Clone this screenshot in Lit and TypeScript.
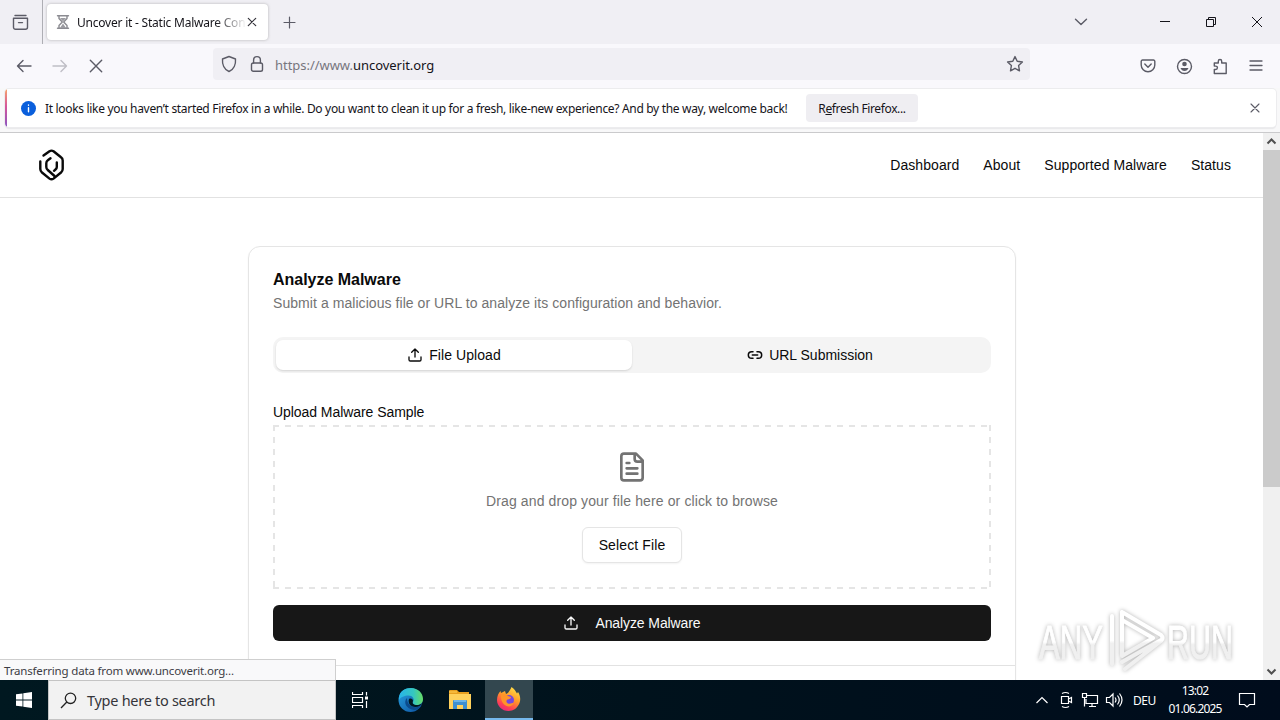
import { LitElement, html, css, svg } from "lit";
import { customElement } from "lit/decorators.js";

const upload = svg`<path d="M12 3v12M17 8l-5-5-5 5M21 15v4a2 2 0 0 1-2 2H5a2 2 0 0 1-2-2v-4"/>`;

@customElement("browser-chrome")
class BrowserChrome extends LitElement {
  static styles = css`
    :host { display: block; font-family: "Noto Sans", "Open Sans", sans-serif; color: #15141a; height: 133px; }
    svg { display: block; fill: none; stroke: #5b5b66; stroke-width: 1.4; stroke-linecap: round; stroke-linejoin: round; flex: none; }
    .tabs { height: 44px; background: #f0eff4; display: flex; align-items: center; box-sizing: border-box; }
    .view { width: 43px; height: 44px; border-right: 1px solid #aeaeb4; display: flex; align-items: center; padding-left: 12px; box-sizing: border-box; }
    .tab { margin-left: 4px; width: 221px; height: 36px; border-radius: 4px; background: #fff; box-shadow: 0 0 3px #8889; display: flex; align-items: center; box-sizing: border-box; padding: 0 9px 0 8px; }
    .title { margin-left: 6px; width: 168px; white-space: nowrap; font-size: 12px; letter-spacing: -0.22px; -webkit-mask-image: linear-gradient(90deg, #000 138px, transparent 170px); }
    .x { margin-left: 2px; }
    .plus { margin-left: 14px; }
    .gap { flex: 1; }
    .win { display: flex; align-items: center; gap: 34px; padding-right: 17px; }
    .win svg { stroke: #15141a; stroke-width: 1; stroke-linecap: butt; stroke-linejoin: miter; }
    .chev { margin-right: 71px; }
    .bar { height: 44px; background: #f9f8fc; display: flex; align-items: center; padding: 0 16px; box-sizing: border-box; }
    .nav { display: flex; gap: 20px; width: 197px; }
    .url { width: 817px; height: 32px; background: #f0eff4; border-radius: 4px; display: flex; align-items: center; padding: 0 6px 0 7px; box-sizing: border-box; margin-top: -4px; }
    .lock { margin: 0 11px 0 12px; }
    .addr { flex: 1; font-size: 13px; color: #77767e; margin-top: 2px; letter-spacing: -0.04px; }
    .addr b { font-weight: 400; color: #15141a; }
    .tools { margin-left: auto; display: flex; gap: 20px; }
    .puzzle { margin-left: -1px; }
    .notice { height: 45px; background: #f8f8f9; border-bottom: 1px solid #cacacc; box-sizing: border-box; padding: 1px 4px 0 5px; }
    .box { height: 38px; background: #fff; border-radius: 4px; box-shadow: 0 0 0 1px #ececee, 0 2px 1px #e8e8ea; display: flex; align-items: center; overflow: hidden; }
    .stripe { width: 2px; height: 38px; background: linear-gradient(#f6a36b, #d6569a 45%, #8a55c0); }
    .info { margin: 0 9px 0 14px; }
    .msg { font-size: 12px; width: 761px; white-space: nowrap; letter-spacing: -0.318px; }
    .btn { width: 112px; height: 28px; border-radius: 4px; background: #efeef2; display: grid; place-items: center; font-size: 12px; letter-spacing: -0.38px; }
    .close { margin-left: auto; margin-right: 16px; }
  `;
  render() {
    return html`
      <div class="tabs">
        <div class="view"><svg width="17" height="17" viewBox="0 0 17 17"><path d="M3 1.5h11M1.5 4.3h14v9a2 2 0 0 1-2 2h-10a2 2 0 0 1-2-2zM6.5 8.6h4"/></svg></div>
        <div class="tab">
          <svg width="16" height="16" viewBox="0 0 16 16"><path stroke="#8b8b91" d="M2.5 1.7h11M2.5 14.3h11M4 2v2.5L7.3 8 4 11.5V14M12 2v2.5L8.7 8l3.3 3.5V14"/><path stroke="none" fill="#9b9ba1" d="M5 4h6L8 7.5zM5 14l3-4.5 3 4.5z"/></svg>
          <span class="title">Uncover it - Static Malware Con</span>
          <svg class="x" width="10" height="10" viewBox="0 0 10 10"><path stroke="#33323a" stroke-width="1.2" d="M1.3 1.3l7.4 7.4M8.7 1.3L1.3 8.7"/></svg>
        </div>
        <svg class="plus" width="15" height="15" viewBox="0 0 15 15"><path stroke-width="1.2" d="M7.5 2v11M2 7.5h11"/></svg>
        <span class="gap"></span>
        <svg class="chev" width="14" height="8" viewBox="0 0 14 8"><path d="M1.5 1.2L7 6.5l5.500-5.300"/></svg>
        <div class="win">
          <svg width="12" height="12" viewBox="0 0 12 12"><path d="M1 5.500h10"/></svg>
          <svg class="r" width="12" height="12" viewBox="0 0 12 12"><path d="M1.500 3.500h7v7h-7zM3.500 3v-1.500h7v7H9"/></svg>
          <svg width="12" height="12" viewBox="0 0 12 12"><path d="M1 1l10 10M11 1L1 11"/></svg>
        </div>
      </div>
      <div class="bar">
        <div class="nav">
          <svg width="16" height="16" viewBox="0 0 16 16"><path d="M15 8H1.500M7 2.500L1.500 8 7 13.500"/></svg>
          <svg width="16" height="16" viewBox="0 0 16 16"><path stroke="#bfbec5" d="M1 8h13.500M9 2.500L14.500 8 9 13.500"/></svg>
          <svg width="16" height="16" viewBox="0 0 16 16"><path d="M2.300 2.300l11.400 11.400M13.700 2.300L2.300 13.700"/></svg>
        </div>
        <div class="url">
          <svg width="18" height="18" viewBox="0 0 18 18"><path d="M9 1.500l6.500 2.500c.4 5-1.500 10.500-6.500 12.500C4 14.500 2.100 9 2.500 4z"/></svg>
          <svg class="lock" width="14" height="18" viewBox="0 0 14 18"><rect x="1.500" y="8" width="11" height="8.300" rx="1.800"/><path d="M3.600 8V5a3.400 3.400 0 0 1 6.800 0v3"/></svg>
          <span class="addr">https://www.<b>uncoverit.org</b></span>
          <svg width="18" height="18" viewBox="0 0 18 18"><path d="M9 1.600l2.200 4.700 5.200.7-3.800 3.600.9 5.200L9 13.300l-4.500 2.500.9-5.200L1.600 7l5.200-.7z"/></svg>
        </div>
        <div class="tools">
          <svg width="16" height="16" viewBox="0 0 16 16"><path d="M2.500 2h11A1.300 1.300 0 0 1 14.800 3.300V7a6.800 6.800 0 0 1-13.600 0V3.300A1.300 1.300 0 0 1 2.500 2zM4.800 6L8 9.200 11.200 6"/></svg>
          <svg width="17" height="17" viewBox="0 0 17 17"><circle cx="8.500" cy="8.500" r="7"/><circle cx="8.500" cy="6" r="2.300" fill="#5b5b66" stroke="none"/><path d="M4.500 10h8c-.7 2-2.200 3-4 3s-3.300-1-4-3z" fill="#5b5b66" stroke="none"/></svg>
          <svg class="puzzle" width="16" height="17" viewBox="0 0 16 17"><path d="M2.300 15.500v-4h1.400a1.700 1.700 0 0 0 0-3.400H2.300V5h4V3.200a1.700 1.700 0 0 1 3.400 0V5h4.500v10.500z"/></svg>
          <svg width="16" height="16" viewBox="0 0 16 16"><path stroke-width="1.300" d="M2 3h12M2 7.500h12M2 12h12"/></svg>
        </div>
      </div>
      <div class="notice"><div class="box">
        <span class="stripe"></span>
        <svg class="info" width="15" height="15" viewBox="0 0 15 15"><circle cx="7.500" cy="7.500" r="7.500" fill="#0a5fdc" stroke="none"/><path stroke="#fff" d="M7.500 6.800v4M7.500 4v.2"/></svg>
        <span class="msg">It looks like you haven’t started Firefox in a while. Do you want to clean it up for a fresh, like-new experience? And by the way, welcome back!</span>
        <span class="btn"><span>R<u>e</u>fresh Firefox...</span></span>
        <svg class="close" width="10" height="10" viewBox="0 0 10 10"><path stroke-width="1.100" d="M1 1l8 8M9 1L1 9"/></svg>
      </div></div>`;
  }
}

@customElement("malware-page")
class MalwarePage extends LitElement {
  static styles = css`
    :host { display: flex; height: 547px; overflow: hidden; font-family: "Liberation Sans", Arial, sans-serif; font-size: 14px; line-height: 20px; color: #0a0a0a; background: #fff; position: relative; }
    svg { fill: none; stroke: currentColor; stroke-width: 2; stroke-linecap: round; stroke-linejoin: round; display: block; flex: none; }
    .page { width: 1263px; flex: none; }
    header { height: 65px; box-sizing: border-box; border-bottom: 1px solid #e2e2e2; display: flex; justify-content: space-between; align-items: center; padding: 0 32px 0 36px; }
    nav { display: flex; gap: 24px; letter-spacing: 0.07px; }
    .card { width: 768px; box-sizing: border-box; height: 560px; margin: 48px auto 0 248px; border: 1px solid #e5e5e5; border-radius: 12px; padding: 25px 24px 24px; box-shadow: 0 1px 2px #0000000d; }
    h1 { margin: 0; font-size: 16px; line-height: 16px; letter-spacing: -0.02px; }
    .sub { margin: 5px 0 24px; color: #737373; letter-spacing: 0.06px; }
    .switch { height: 36px; box-sizing: border-box; background: #f4f4f4; border-radius: 10px; padding: 3px; display: grid; grid-template-columns: 1fr 1fr; letter-spacing: 0; }
    .opt { display: flex; align-items: center; justify-content: center; gap: 6px; border-radius: 7px; }
    .on { background: #fff; box-shadow: 0 1px 2px #0002; letter-spacing: 0.08px; }
    .label { margin-top: 29px; line-height: 20px; letter-spacing: -0.06px; }
    .drop { margin-top: 3px; height: 164px; box-sizing: border-box; color: #737373; display: flex; flex-direction: column; align-items: center; padding-top: 26px; letter-spacing: 0.12px; background:
      repeating-linear-gradient(90deg, #e5e5e5 0 6px, transparent 6px 12px) 0 0 / 100% 2px no-repeat,
      repeating-linear-gradient(90deg, #e5e5e5 0 6px, transparent 6px 12px) 0 100% / 100% 2px no-repeat,
      repeating-linear-gradient(#e5e5e5 0 6px, transparent 6px 12px) 0 0 / 2px 100% no-repeat,
      repeating-linear-gradient(#e5e5e5 0 6px, transparent 6px 12px) 100% 0 / 2px 100% no-repeat; }
    .hint { margin-top: 8px; }
    .select { margin-top: 16px; width: 100px; height: 36px; box-sizing: border-box; border: 1px solid #e5e5e5; border-radius: 6px; color: #0a0a0a; display: grid; place-items: center; box-shadow: 0 1px 2px #0000000d; background: #fff; }
    .go { margin-top: 16px; height: 36px; background: #171717; color: #fafafa; border-radius: 6px; display: flex; align-items: center; justify-content: center; gap: 16px; letter-spacing: -0.1px; }
    .rule { margin: 24px -24px 0; border-top: 1px solid #e2e2e2; }
    .scroll { width: 17px; background: #f0f0f0; display: flex; flex-direction: column; justify-content: space-between; }
    .scroll svg { stroke: #505050; stroke-linecap: butt; stroke-linejoin: miter; }
    .thumb { height: 337px; background: #cbcbcb; margin-bottom: auto; }
    .mark { position: absolute; left: 1030px; top: 467px; stroke: none; filter: drop-shadow(0 0 2px #0000004d); }
    .mark text { font: 400 49px/1 "Liberation Sans", Arial, sans-serif; }
    .status { position: absolute; left: 0; bottom: 0; width: 336px; height: 21px; box-sizing: border-box; border: solid #cfcfcf; border-width: 1px 1px 0 0; background: #f9f9fa; color: #3c3c44; font: 11.500px/22px "Noto Sans", "Open Sans", sans-serif; padding-left: 4px; letter-spacing: -0.17px; white-space: nowrap; }
  `;
  render() {
    return html`
      <div class="page">
        <header>
          <svg width="32" height="34" viewBox="0 0 32 34"><g stroke="#0a0a0a" stroke-width="2.400"><path d="M7.500 7.500L13.500 3.200q2-1.200 4 0L25 9.300q1.700 1.300 1.700 3.200V21q0 2-1.700 3.500L17.500 30.600q-2 1.500-4 0L6 24.500Q4.300 23 4.300 21V13.500"/><path d="M14.500 10.300L11.800 12.300q-1.500 1-1.500 3V19q0 1.800 1.500 3L18.500 28M20.800 14.500V19q0 1.500-1.300 2.500L18 22.800"/></g></svg>
          <nav><span>Dashboard</span><span>About</span><span>Supported Malware</span><span>Status</span></nav>
        </header>
        <main class="card">
          <h1>Analyze Malware</h1>
          <div class="sub">Submit a malicious file or URL to analyze its configuration and behavior.</div>
          <div class="switch">
            <div class="opt on"><svg width="16" height="16" viewBox="0 0 24 24">${upload}</svg>File Upload</div>
            <div class="opt"><svg width="16" height="16" viewBox="0 0 24 24"><path stroke-width="2.300" d="M9 17H7A5 5 0 0 1 7 7h2M15 7h2a5 5 0 1 1 0 10h-2M8 12h8"/></svg>URL Submission</div>
          </div>
          <div class="label">Upload Malware Sample</div>
          <div class="drop">
            <svg width="32" height="32" viewBox="0 0 24 24"><path d="M15 2H6a2 2 0 0 0-2 2v16a2 2 0 0 0 2 2h12a2 2 0 0 0 2-2V7zM14 2v4a2 2 0 0 0 2 2h4M10 9H8M16 13H8M16 17H8"/></svg>
            <div class="hint">Drag and drop your file here or click to browse</div>
            <div class="select">Select File</div>
          </div>
          <div class="go"><svg width="16" height="16" viewBox="0 0 24 24">${upload}</svg>Analyze Malware</div>
          <div class="rule"></div>
        </main>
      </div>
      <div class="scroll">
        <svg width="17" height="17" viewBox="0 0 17 17"><path d="M4.500 10.500l4-4 4 4"/></svg>
        <div class="thumb"></div>
        <svg width="17" height="17" viewBox="0 0 17 17"><path d="M4.500 6.500l4 4 4-4"/></svg>
      </div>
      <svg class="mark" width="214" height="80" viewBox="0 0 214 80">
        <defs><linearGradient id="fade" x2="0" y2="1"><stop offset=".5" stop-color="#fff"/><stop offset=".55" stop-color="#f0f0f0"/></linearGradient></defs>
        <g fill="url(#fade)" stroke="url(#fade)" stroke-width="1"><text x="9" y="59" textLength="64" lengthAdjust="spacingAndGlyphs">ANY</text><text x="137" y="59" textLength="66" lengthAdjust="spacingAndGlyphs">RUN</text></g>
        <g stroke="url(#fade)" stroke-width="4"><path d="M82 16v48M92 12l39 23q3 3 0 6L95 69M92 12v44l31-18-31-18M92 62l39-22"/></g>
      </svg>
      <div class="status">Transferring data from www.uncoverit.org...</div>`;
  }
}

@customElement("task-bar")
class TaskBar extends LitElement {
  static styles = css`
    :host { display: flex; height: 40px; background: linear-gradient(90deg, #001820, #00121c 50%, #000c1c); color: #fff; font-family: "Noto Sans", "Open Sans", sans-serif; align-items: center; }
    svg { display: block; fill: none; stroke: #fff; stroke-width: 1.200; flex: none; }
    .start { width: 48px; display: grid; place-items: center; }
    .search { width: 288px; height: 40px; box-sizing: border-box; background: #f2f2f2; border: 1px solid #c4c4c4; color: #35353a; display: flex; align-items: center; padding-left: 11px; gap: 10px; font-size: 14.500px; letter-spacing: -0.28px; }
    .app { width: 48px; height: 40px; display: grid; place-items: center; }
    .app svg { stroke: none; }
    .app .tv { stroke: #fff; }
    .edge { width: 54px; }
    .files { width: 44px; }
    .active { width: 48px; margin-left: 3px; background: #33474f; border-bottom: 2px solid #76b9ed; box-sizing: border-box; }
    .tray { margin-left: auto; display: flex; align-items: center; height: 40px; }
    .lang { font-size: 12px; width: 31px; letter-spacing: -0.5px; margin-left: 10px; }
    .clock { font-size: 12px; line-height: 18px; width: 62px; text-align: center; letter-spacing: -0.820px; }
    .note { margin: 0 24px 0 12px; }
    .a { margin-right: 9px; } .b { margin-right: 7px; } .c { margin-right: 6px; }
  `;
  render() {
    return html`
      <div class="start"><svg width="16" height="16" viewBox="0 0 16 16"><path stroke="none" fill="#fff" d="M0 2.300l6.500-.9v6.200H0zM7.300 1.300L16 0v7.600H7.300zM0 8.400h6.500v6.200L0 13.700zM7.300 8.400H16V16l-8.700-1.300z"/></svg></div>
      <div class="search"><svg width="17" height="17" viewBox="0 0 17 17"><g stroke="#222" stroke-width="1.300"><circle cx="10.500" cy="6.300" r="5.200"/><path d="M6.800 10L1 16"/></g></svg>Type here to search</div>
      <div class="app"><svg class="tv" width="16" height="16" viewBox="0 0 16 16"><path d="M.5 0v2.500h10V0M.5 16v-2.500h10V16M.5 5.500h10v5H.5zM14.500 0v3.500M14.500 9v7"/><path fill="#fff" stroke="none" d="M13 4.500h3v3h-3z"/></svg></div>
      <div class="app edge"><svg width="26" height="26" viewBox="0 0 26 26"><defs><linearGradient id="e1"><stop stop-color="#28b4ea"/><stop offset=".6" stop-color="#35c7c0"/><stop offset="1" stop-color="#67dd65"/></linearGradient><linearGradient id="e2" x2="1" y2="1"><stop stop-color="#28a3e2"/><stop offset="1" stop-color="#0c4f9e"/></linearGradient></defs><circle cx="12.500" cy="13" r="12" fill="url(#e2)"/><path fill="url(#e1)" d="M1 10C2 4 7 1 13 1c7 0 12 5 12 11 0 4-3 6-6.500 6-3 0-4-1.500-3.500-3 2-3-.5-6.500-4.500-6.500S2.500 10 1 13z"/><path fill="#0b4b8d" d="M9 11c-4 4-1 11 7 12 3 0 5.500-1.500 7-4-7 3-14 0-14-8z"/><path fill="#001820" d="M11 12c2-1 4 0 4 2-1 2 0 4 4 4 2 0 4-.7 5-1.500-1 2-3.500 3.500-6.500 3.500-5 0-8-4-6.500-8z"/></svg></div>
      <div class="app files"><svg width="22" height="20" viewBox="0 0 22 20"><path fill="#e8a020" d="M0 1q0-1 1-1h7l2 2h10v4H0z"/><path fill="#ffd15c" d="M0 4h22v15H0z"/><path fill="#f5b83a" d="M0 1h8v2H0z"/><path fill="#3d8fd0" d="M4 19v-8q0-1 1-1h12q1 0 1 1v8h-4v-4H8v4z"/><path fill="#6bb4e8" d="M5 10h12v2H5z"/></svg></div>
      <div class="app active"><svg width="24" height="24" viewBox="0 0 24 24"><defs><linearGradient id="f1" x1=".8" y1="0" x2=".3" y2="1"><stop stop-color="#ffe34a"/><stop offset=".45" stop-color="#ff9a28"/><stop offset=".8" stop-color="#ff4055"/><stop offset="1" stop-color="#e62a7b"/></linearGradient></defs><path fill="url(#f1)" d="M14.500 0c3 2 4 4 5.500 6.500l1-1.500c2 3 3 7 1.500 11-2 5-6 8-11 8C5 24 0 19 0 13c0-4 1.500-7 3.500-9L4 6l4-2 1 3c2-1 4-3 5.500-7z"/><circle cx="12" cy="13" r="5" fill="#7548df"/><path fill="#ff9428" d="M4 8c2-1 5-1 7 1l3 1c0 2-2 2-3.500 2.500-1.500 1-1.500 3 .5 4 2 .7 4-.5 5.500-.5-1 3-4 4-7 3-4-2-6-6-5.500-11z"/></svg></div>
      <div class="tray">
        <svg class="a" width="14" height="14" viewBox="0 0 14 14"><path d="M1.500 10L7 4.500l5.500 5.500"/></svg>
        <svg class="b" width="16" height="18" viewBox="0 0 16 18"><path d="M3.500 5.500h7v7h-7zM10.500 8l3-1.500v5l-3-1.500M4 2.500q3.500-2 7 0M4 15.500q3.500 2 7 0"/></svg>
        <svg class="c" width="18" height="16" viewBox="0 0 18 16"><path d="M6 3.500h10.500v8H5V7M8 14.500h7M11 11.500v3M1.500 1.500h4v4h-4zM3.500 5.500v9"/></svg>
        <svg width="18" height="16" viewBox="0 0 18 16"><path d="M1.500 5.500h3L8 2v12l-3.500-3.500h-3zM10 5.500q2 2.500 0 5M12.500 3.500q3.500 4.500 0 9M14.500 1.500q5 6.500 0 13"/></svg>
        <span class="lang">DEU</span>
        <div class="clock">13:02<br>01.06.2025</div>
        <svg class="note" width="18" height="18" viewBox="0 0 18 18"><path d="M1.500 2.500h15v11h-5L9 16l-2.500-2.500h-5z"/></svg>
      </div>`;
  }
}

@customElement("app-root")
class AppRoot extends LitElement {
  static styles = css`:host { display: block; width: 1280px; height: 720px; overflow: hidden; }`;
  render() {
    return html`<browser-chrome></browser-chrome><malware-page></malware-page><task-bar></task-bar>`;
  }
}
